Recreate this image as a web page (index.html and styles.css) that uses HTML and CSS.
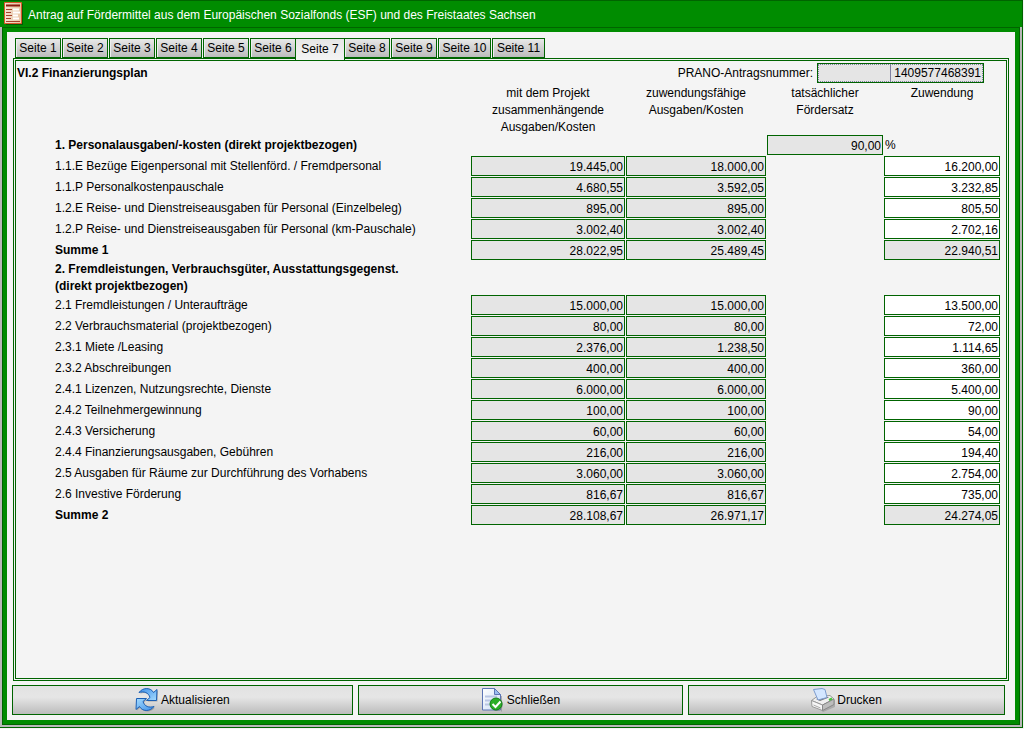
FILE: index.html
```html
<!DOCTYPE html>
<html lang="de">
<head>
<meta charset="utf-8">
<title>Antrag auf Fördermittel</title>
<link rel="stylesheet" href="styles.css">
</head>
<body>
<div class="window">
  <header class="titlebar">
    <svg class="title-icon" width="20" height="24" viewBox="0 0 20 24" aria-hidden="true">
      <defs><linearGradient id="doc" x1="0" y1="0" x2="1" y2="0"><stop offset="0" stop-color="#f3e2d2"/><stop offset="1" stop-color="#e8c4a0"/></linearGradient></defs>
      <path d="M2 2h17v21H2z" fill="#035c03"/>
      <path d="M.5.5h17v21H.5z" fill="url(#doc)" stroke="#d8572c"/>
      <path d="M2 3.500h14" stroke="#8c1c10" stroke-width="2"/>
      <path d="M2 7.500h6M2 10.500h5M2 13.500h6M2 16.500h5M2 19.500h14" stroke="#a5422c"/>
      <path d="M9 7.500h6M9 10.500h7M9 13.500h5M9 16.500h6" stroke="#fff" stroke-width="2"/>
    </svg>
    <h1 class="title">Antrag auf Fördermittel aus dem Europäischen Sozialfonds (ESF) und des Freistaates Sachsen</h1>
  </header>
  <div class="frame">
    <main class="content">
      <nav class="tabs" role="tablist">
        <button class="tab" role="tab">Seite 1</button>
        <button class="tab" role="tab">Seite 2</button>
        <button class="tab" role="tab">Seite 3</button>
        <button class="tab" role="tab">Seite 4</button>
        <button class="tab" role="tab">Seite 5</button>
        <button class="tab" role="tab">Seite 6</button>
        <button class="tab active" role="tab" aria-selected="true">Seite 7</button>
        <button class="tab" role="tab">Seite 8</button>
        <button class="tab" role="tab">Seite 9</button>
        <button class="tab wide" role="tab">Seite 10</button>
        <button class="tab wide" role="tab">Seite 11</button>
      </nav>
      <section class="panel">
        <div class="panel-head">
          <h2 class="heading">VI.2 Finanzierungsplan</h2>
          <label class="number-label" for="prano">PRANO-Antragsnummer:</label>
          <span class="number-box"><input class="number" id="prano" value="1409577468391" readonly></span>
        </div>
        <table class="plan">
          <colgroup><col><col class="c-cost"><col class="c-eligible"><col class="c-rate"><col class="c-grant"></colgroup>
          <thead>
            <tr><td></td><th scope="col"><span class="column-title">mit dem Projekt<br>zusammenhängende<br>Ausgaben/Kosten</span></th><th scope="col"><span class="column-title">zuwendungsfähige<br>Ausgaben/Kosten</span></th><th scope="col"><span class="column-title">tatsächlicher<br>Fördersatz</span></th><th scope="col"><span class="column-title">Zuwendung</span></th></tr>
          </thead>
          <tbody>
            <tr><th class="strong" scope="row" colspan="3">1. Personalausgaben/-kosten (direkt projektbezogen)</th><td><input class="field locked" id="rate" aria-label="tatsächlicher Fördersatz" value="90,00" readonly></td><td><label class="percent" for="rate">%</label></td></tr>
            <tr><th scope="row" id="r1">1.1.E Bezüge Eigenpersonal mit Stellenförd. / Fremdpersonal</th><td><input class="field locked" aria-labelledby="r1" value="19.445,00" readonly></td><td><input class="field locked" aria-labelledby="r1" value="18.000,00" readonly></td><td></td><td><input class="field" aria-labelledby="r1" value="16.200,00"></td></tr>
            <tr><th scope="row" id="r2">1.1.P Personalkostenpauschale</th><td><input class="field locked" aria-labelledby="r2" value="4.680,55" readonly></td><td><input class="field locked" aria-labelledby="r2" value="3.592,05" readonly></td><td></td><td><input class="field" aria-labelledby="r2" value="3.232,85"></td></tr>
            <tr><th scope="row" id="r3">1.2.E Reise- und Dienstreiseausgaben für Personal (Einzelbeleg)</th><td><input class="field locked" aria-labelledby="r3" value="895,00" readonly></td><td><input class="field locked" aria-labelledby="r3" value="895,00" readonly></td><td></td><td><input class="field" aria-labelledby="r3" value="805,50"></td></tr>
            <tr><th scope="row" id="r4">1.2.P Reise- und Dienstreiseausgaben für Personal (km-Pauschale)</th><td><input class="field locked" aria-labelledby="r4" value="3.002,40" readonly></td><td><input class="field locked" aria-labelledby="r4" value="3.002,40" readonly></td><td></td><td><input class="field" aria-labelledby="r4" value="2.702,16"></td></tr>
            <tr><th class="strong" scope="row" id="s1">Summe 1</th><td><input class="field locked" aria-labelledby="s1" value="28.022,95" readonly></td><td><input class="field locked" aria-labelledby="s1" value="25.489,45" readonly></td><td></td><td><input class="field locked" aria-labelledby="s1" value="22.940,51" readonly></td></tr>
          </tbody>
          <tbody>
            <tr><th class="strong" scope="rowgroup" colspan="5"><span class="group-title">2. Fremdleistungen, Verbrauchsgüter, Ausstattungsgegenst.<br>(direkt projektbezogen)</span></th></tr>
            <tr><th scope="row" id="r5">2.1 Fremdleistungen / Unteraufträge</th><td><input class="field locked" aria-labelledby="r5" value="15.000,00" readonly></td><td><input class="field locked" aria-labelledby="r5" value="15.000,00" readonly></td><td></td><td><input class="field" aria-labelledby="r5" value="13.500,00"></td></tr>
            <tr><th scope="row" id="r6">2.2 Verbrauchsmaterial (projektbezogen)</th><td><input class="field locked" aria-labelledby="r6" value="80,00" readonly></td><td><input class="field locked" aria-labelledby="r6" value="80,00" readonly></td><td></td><td><input class="field" aria-labelledby="r6" value="72,00"></td></tr>
            <tr><th scope="row" id="r7">2.3.1 Miete /Leasing</th><td><input class="field locked" aria-labelledby="r7" value="2.376,00" readonly></td><td><input class="field locked" aria-labelledby="r7" value="1.238,50" readonly></td><td></td><td><input class="field" aria-labelledby="r7" value="1.114,65"></td></tr>
            <tr><th scope="row" id="r8">2.3.2 Abschreibungen</th><td><input class="field locked" aria-labelledby="r8" value="400,00" readonly></td><td><input class="field locked" aria-labelledby="r8" value="400,00" readonly></td><td></td><td><input class="field" aria-labelledby="r8" value="360,00"></td></tr>
            <tr><th scope="row" id="r9">2.4.1 Lizenzen, Nutzungsrechte, Dienste</th><td><input class="field locked" aria-labelledby="r9" value="6.000,00" readonly></td><td><input class="field locked" aria-labelledby="r9" value="6.000,00" readonly></td><td></td><td><input class="field" aria-labelledby="r9" value="5.400,00"></td></tr>
            <tr><th scope="row" id="r10">2.4.2 Teilnehmergewinnung</th><td><input class="field locked" aria-labelledby="r10" value="100,00" readonly></td><td><input class="field locked" aria-labelledby="r10" value="100,00" readonly></td><td></td><td><input class="field" aria-labelledby="r10" value="90,00"></td></tr>
            <tr><th scope="row" id="r11">2.4.3 Versicherung</th><td><input class="field locked" aria-labelledby="r11" value="60,00" readonly></td><td><input class="field locked" aria-labelledby="r11" value="60,00" readonly></td><td></td><td><input class="field" aria-labelledby="r11" value="54,00"></td></tr>
            <tr><th scope="row" id="r12">2.4.4 Finanzierungsausgaben, Gebühren</th><td><input class="field locked" aria-labelledby="r12" value="216,00" readonly></td><td><input class="field locked" aria-labelledby="r12" value="216,00" readonly></td><td></td><td><input class="field" aria-labelledby="r12" value="194,40"></td></tr>
            <tr><th scope="row" id="r13">2.5 Ausgaben für Räume zur Durchführung des Vorhabens</th><td><input class="field locked" aria-labelledby="r13" value="3.060,00" readonly></td><td><input class="field locked" aria-labelledby="r13" value="3.060,00" readonly></td><td></td><td><input class="field" aria-labelledby="r13" value="2.754,00"></td></tr>
            <tr><th scope="row" id="r14">2.6 Investive Förderung</th><td><input class="field locked" aria-labelledby="r14" value="816,67" readonly></td><td><input class="field locked" aria-labelledby="r14" value="816,67" readonly></td><td></td><td><input class="field" aria-labelledby="r14" value="735,00"></td></tr>
            <tr><th class="strong" scope="row" id="s2">Summe 2</th><td><input class="field locked" aria-labelledby="s2" value="28.108,67" readonly></td><td><input class="field locked" aria-labelledby="s2" value="26.971,17" readonly></td><td></td><td><input class="field locked" aria-labelledby="s2" value="24.274,05" readonly></td></tr>
          </tbody>
        </table>
      </section>
      <footer class="actions">
        <button class="action">
          <svg width="24" height="24" viewBox="0 0 24 24" aria-hidden="true">
            <defs>
              <linearGradient id="blue" x1="0" y1="0" x2="1" y2="1"><stop offset="0" stop-color="#3f8fe8"/><stop offset="1" stop-color="#a5dcff"/></linearGradient>
              <path id="arrow" d="M4 4.500C8-1 16-.5 18.500 4.500l3.500-3-.5 11H11.500l3.500-3C13.500 4.500 9 3 4 4.500z"/>
            </defs>
            <g fill="#777" opacity=".5" transform="translate(1 1)"><use href="#arrow"/><use href="#arrow" transform="rotate(180 11.500 11.500)"/></g>
            <g fill="url(#blue)" stroke="#1b5fb4" stroke-linejoin="round"><use href="#arrow"/><use href="#arrow" transform="rotate(180 11.500 11.500)"/></g>
          </svg>Aktualisieren
        </button>
        <button class="action">
          <svg width="24" height="24" viewBox="0 0 24 24" aria-hidden="true">
            <defs><linearGradient id="page" x1="0" y1="0" x2="1" y2="1"><stop offset="0" stop-color="#fff"/><stop offset="1" stop-color="#cbdcf5"/></linearGradient></defs>
            <path d="M3 23.500h17V8h1v15.500H3z" fill="#888" opacity=".6"/>
            <path d="M1.500.5h12l6 6v15.500h-18z" fill="url(#page)" stroke="#5c74b4"/>
            <path d="M13.500.5v6h6z" fill="#9bbdf0" stroke="#5c74b4"/>
            <path d="M4 8.500h12M4 12.500h8M4 16.500h5" stroke="#b9c6e4" stroke-width="2"/>
            <circle cx="15.500" cy="16.500" r="6.500" fill="#777" opacity=".5"/>
            <circle cx="15" cy="16" r="6" fill="#2cae27" stroke="#118018"/>
            <path d="M11.500 16l3 3 5-5.500" fill="none" stroke="#fff" stroke-width="2"/>
          </svg>Schließen
        </button>
        <button class="action">
          <svg width="24" height="24" viewBox="0 0 24 24" aria-hidden="true">
            <path d="M2 15l10 9 12-5v-7z" fill="#888" opacity=".5"/>
            <path d="M.5 12.500L6 8.500l13-1 4 3.500-11.500 6z" fill="#f0f0f0" stroke="#999"/>
            <path d="M5 11l10-2.500 3 1-9 3.500z" fill="#777"/>
            <path d="M2.500 1.500L11 .5l3 1 2 8-9 2.500z" fill="#d3e6ff" stroke="#7c9bce"/>
            <path d="M.5 12.500l11 4.500v5.500L1 18.500z" fill="#f6f6f6" stroke="#999"/>
            <path d="M11.500 17L23 11v5.500l-11.500 6z" fill="#bdbdbd" stroke="#888"/>
            <path d="M2.500 17l7 3" stroke="#aaa"/>
            <path d="M18 12l3-1.500" stroke="#45c33b" stroke-width="2"/>
          </svg>Drucken
        </button>
      </footer>
    </main>
  </div>
</div>
</body>
</html>
```
FILE: styles.css
```css
* { box-sizing: border-box; }

body {
  margin: 0;
  min-height: 100vh;
  padding: 0 1px 1px 0;
  display: flex;
  background: #f4f4f4;
  color: #000;
  font: 12px/17px "Liberation Sans", Arial, sans-serif;
}

button, input { font: inherit; color: inherit; border-radius: 0; }

.window {
  flex: 1;
  min-width: 0;
  display: flex;
  flex-direction: column;
  border: solid #006400;
  border-width: 1px 1px 1px 0;
  background: #b8b8b8;
}

.titlebar {
  display: flex;
  align-items: center;
  gap: 4px;
  height: 26px;
  padding: 0 4px;
  background: #008c00;
  color: #fff;
}

.title-icon { flex: none; }
.title { margin: 0; padding-top: 2px; font-size: 12px; font-weight: normal; }

.frame {
  flex: 1;
  display: flex;
  margin: 0 2px 2px;
  border: 1px solid #006400;
  background: #008c00;
  padding: 4px;
}

.content {
  flex: 1;
  min-width: 0;
  display: flex;
  flex-direction: column;
  padding: 6px 6px 5px;
  background: #f4f4f4;
}

.tabs {
  display: flex;
  align-items: flex-end;
  gap: 1px;
  height: 20px;
  padding-left: 2px;
}

.tab {
  min-width: 46px;
  height: 20px;
  padding: 1px 3px 0;
  border: 1px solid #006400;
  box-shadow: inset 1px 0 #eee;
  background: linear-gradient(#e8e8e8, #bcbcbc);
}

.tab.wide { min-width: 53px; }

.tab.active {
  z-index: 1;
  min-width: 50px;
  height: 22px;
  margin: 0 -2px -2px;
  padding-top: 0;
  border-bottom: 0;
  box-shadow: none;
  background: linear-gradient(#e6e6e6, #f4f4f4);
}

.panel {
  flex: 1;
  border: 3px double #006400;
  padding: 2px 5px 0 0;
}

.panel-head {
  display: flex;
  align-items: center;
  padding: 0 17px 0 1px;
}

.heading { flex: 1; margin: 0; font-size: 12px; }
.number-label { padding-right: 4px; }

.number-box {
  display: flex;
  justify-content: flex-end;
  width: 167px;
  height: 20px;
  border: 1px solid #006400;
  outline: 1px dotted #8080a0;
  outline-offset: -2px;
  background: #e5e5e5;
}

.number {
  width: 93px;
  padding: 0 2px;
  border: 0;
  border-left: 1px solid #8080a0;
  background: transparent;
  text-align: right;
}

.plan {
  width: 100%;
  table-layout: fixed;
  border-spacing: 1px;
  margin-top: -1px;
}

.c-cost { width: 154px; }
.c-eligible { width: 140px; }
.c-rate, .c-grant { width: 116px; }

.plan th, .plan td { padding: 0; font-weight: normal; vertical-align: top; }
.plan tbody th { padding-left: 38px; text-align: left; vertical-align: middle; }
.plan tbody th.strong { font-weight: bold; }

/* Titles reach slightly into the line gap below them. */
.column-title { display: block; padding-top: 2px; margin-bottom: -2px; }
.group-title { display: block; margin-bottom: -1px; }

.field {
  display: block;
  width: 100%;
  height: 20px;
  padding: 1px 1px 0;
  border: 1px solid #006400;
  background: #fff;
  text-align: right;
}

.field.locked { background: #e5e5e5; }
.percent { display: block; padding-left: 1px; line-height: 20px; }

.actions {
  display: flex;
  gap: 5px;
  margin-top: 4px;
  padding-right: 4px;
  margin-left: -1px;
}

.action {
  flex: 1 1 auto;
  display: flex;
  align-items: center;
  justify-content: center;
  gap: 2px;
  height: 30px;
  padding: 0;
  border: 1px solid #006400;
  background: linear-gradient(#e2e2e2, #e6e6e6 40%, #bcbcbc);
}
```
